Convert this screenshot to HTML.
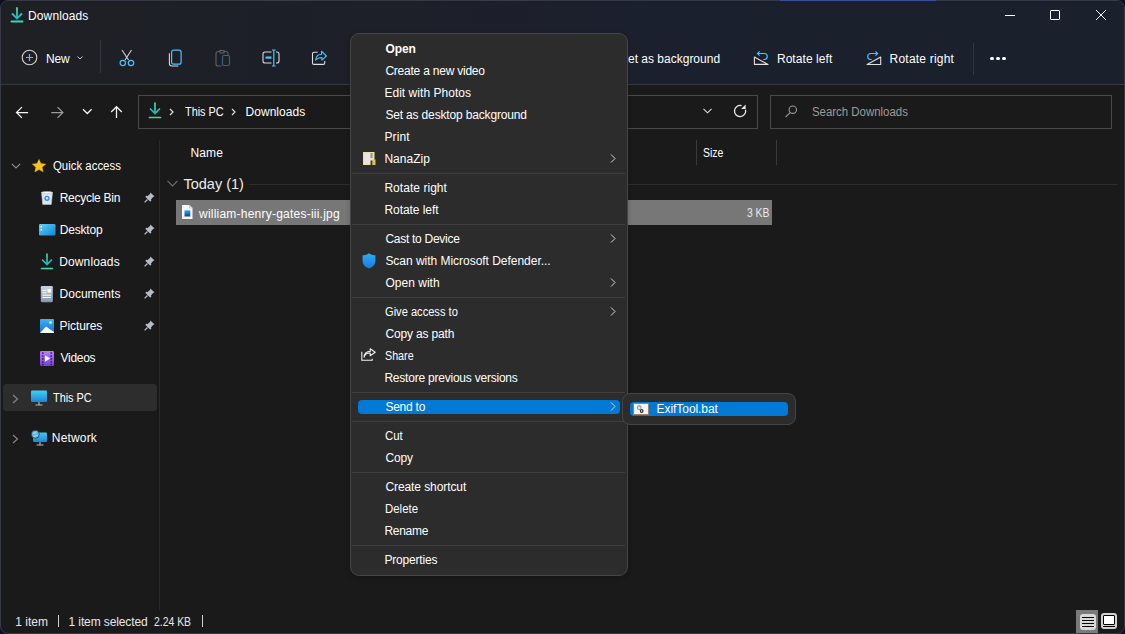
<!DOCTYPE html>
<html><head><meta charset="utf-8">
<style>
*{box-sizing:border-box;margin:0;padding:0}
html,body{width:1125px;height:634px;overflow:hidden;background:#0b1120}
body{font-family:"Liberation Sans",sans-serif;font-size:12px;color:#fff;position:relative}
.a{position:absolute}
.t{position:absolute;white-space:nowrap;line-height:14px}
svg{position:absolute;overflow:visible}
</style></head><body>

<div class="a" style="left:0;top:0;width:1125px;height:634px;border-radius:8px;background:#1a1a1a;overflow:hidden;border:1px solid #363b47"><div class="a" style="left:0;top:0;width:100%;height:84px;background:linear-gradient(to right,#1f2024 0,#1e2027 150px,#1d1f2a 440px,#1b202e 650px,#1b202d 100%)"></div><div class="a" style="left:0;top:83px;width:100%;height:1px;background:#363840"></div></div>
<div class="a" style="left:780px;top:0px;width:156px;height:1px;background:#3c4e9a"></div>
<svg style="left:10px;top:7px" width="14" height="16" viewBox="0 0 14 16"><defs><linearGradient id="g1" gradientUnits="userSpaceOnUse" x1="0" y1="0" x2="0" y2="12"><stop offset="0" stop-color="#3fe6a2"/><stop offset="1" stop-color="#1fb0c4"/></linearGradient></defs><path d="M7 1v10M2.5 7l4.5 4.5L11.5 7" stroke="url(#g1)" stroke-width="1.8" fill="none" stroke-linecap="round"/><path d="M1.5 14.5h11" stroke="#34dca6" stroke-width="1.8" stroke-linecap="round"/></svg>
<div class="t" style="left:28.00px;top:9.00px;letter-spacing:0.125px">Downloads</div>
<div class="a" style="left:1005px;top:15px;width:10px;height:1px;background:#fff"></div>
<div class="a" style="left:1050px;top:10px;width:10px;height:10px;border:1px solid #fff;border-radius:1px"></div>
<svg style="left:1096px;top:10px" width="10" height="10" viewBox="0 0 10 10"><path d="M0 0L10 10M10 0L0 10" stroke="#fff" stroke-width="1"/></svg>
<svg style="left:21px;top:49px" width="17" height="17" viewBox="0 0 17 17"><circle cx="8.5" cy="8.5" r="7.3" stroke="#d0d0d0" stroke-width="1.1" fill="none"/><path d="M8.5 5v7M5 8.5h7" stroke="#4cc2ff" stroke-width="1.2"/></svg>
<div class="t" style="left:45.90px;top:52.00px;letter-spacing:-0.150px">New</div>
<svg style="left:77px;top:56px" width="6" height="4" viewBox="0 0 6 4"><path d="M0.5 0.5L3 3L5.5 0.5" stroke="#c8c8c8" stroke-width="1" fill="none"/></svg>
<div class="a" style="left:100px;top:40px;width:1px;height:33px;background:#33363f"></div>
<svg style="left:118px;top:49px" width="18" height="18" viewBox="0 0 18 18"><path d="M4 1l6.5 10M13.5 1L7 11" stroke="#d0d0d0" stroke-width="1.1" fill="none"/><circle cx="4.8" cy="14" r="2.7" stroke="#4cc2ff" stroke-width="1.2" fill="none"/><circle cx="13" cy="14" r="2.7" stroke="#4cc2ff" stroke-width="1.2" fill="none"/></svg>
<svg style="left:168px;top:49px" width="16" height="18" viewBox="0 0 16 18"><rect x="3.6" y="1.2" width="9.5" height="14" rx="2" stroke="#4cc2ff" stroke-width="1.2" fill="none"/><path d="M1.4 4.2v10.4a2.4 2.4 0 0 0 2.4 2.4h6.6" stroke="#d8d8d8" stroke-width="1.1" fill="none"/></svg>
<svg style="left:215px;top:49px" width="17" height="18" viewBox="0 0 17 18"><path d="M5 2.5H3a2 2 0 0 0-2 2v10.5a2 2 0 0 0 2 2h3.5M9 2.5h2a2 2 0 0 1 2 2V6M5 1.5h4v2.5H5z" stroke="#606060" stroke-width="1.1" fill="none"/><rect x="7.5" y="6.5" width="7" height="10" rx="1.5" stroke="#2d6a8c" stroke-width="1.1" fill="none"/></svg>
<svg style="left:262px;top:49px" width="19" height="18" viewBox="0 0 19 18"><path d="M9.5 3H3a2 2 0 0 0-2 2v7a2 2 0 0 0 2 2h6.5M14 3h1a2 2 0 0 1 2 2v7a2 2 0 0 1-2 2h-1" stroke="#d8d8d8" stroke-width="1.1" fill="none"/><path d="M11.8 1v16M10 1h3.6M10 17h3.6" stroke="#4cc2ff" stroke-width="1.2" fill="none"/><rect x="3.5" y="7.5" width="6" height="2.2" fill="#4cc2ff"/></svg>
<svg style="left:311px;top:49px" width="18" height="18" viewBox="0 0 18 18"><path d="M6.7 3.2H3a1.5 1.5 0 0 0-1.5 1.5V13.9a1.5 1.5 0 0 0 1.5 1.5H12.2a1.5 1.5 0 0 0 1.5-1.5V11.9" stroke="#e0e0e0" stroke-width="1.1" fill="none"/><path d="M4.5 11.2C5 7.5 7.5 5.2 10.5 5.2V2.2L15.4 7L10.9 11.2V8.6C8 8.4 6 9.5 4.5 11.2z" stroke="#4cc2ff" stroke-width="1.1" fill="none" stroke-linejoin="round"/></svg>
<div class="t" style="left:620px;top:52px">Set as background</div>
<svg style="left:752px;top:51px" width="18" height="16" viewBox="0 0 18 16"><path d="M2.4 6.1V13.4H16z" stroke="#e0e0e0" stroke-width="1.1" fill="none" stroke-linejoin="round"/><path d="M5.5 2.5H12.3A3 3 0 0 1 12.3 8.5H11.3M7.6 0.3L5.4 2.5L7.6 4.7" stroke="#4cc2ff" stroke-width="1.1" fill="none"/></svg>
<div class="t" style="left:776.90px;top:52.00px;letter-spacing:0.070px">Rotate left</div>
<svg style="left:866px;top:50px" width="18" height="16" viewBox="0 0 18 16"><path d="M14.7 7.1V14.5H1.1z" stroke="#e0e0e0" stroke-width="1.1" fill="none" stroke-linejoin="round"/><path d="M11.6 3.5H4.7A3 3 0 0 0 4.7 9.5H5.7M9.5 1.3L11.7 3.5L9.5 5.7" stroke="#4cc2ff" stroke-width="1.1" fill="none"/></svg>
<div class="t" style="left:889.60px;top:52.00px;letter-spacing:0.209px">Rotate right</div>
<div class="a" style="left:973px;top:43px;width:1px;height:32px;background:#33363f"></div>
<div class="a" style="left:989.6px;top:57px;width:4px;height:3px;border-radius:1.5px;background:#fff"></div>
<div class="a" style="left:995.9px;top:57px;width:4px;height:3px;border-radius:1.5px;background:#fff"></div>
<div class="a" style="left:1002.2px;top:57px;width:4px;height:3px;border-radius:1.5px;background:#fff"></div>
<svg style="left:15px;top:105px" width="15" height="14" viewBox="0 0 15 14"><path d="M13.1 7.5H2M6.9 2.1L1.5 7.5L6.9 12.9" stroke="#f4f4f4" stroke-width="1.25" fill="none"/></svg>
<svg style="left:50px;top:105px" width="15" height="14" viewBox="0 0 15 14"><path d="M1.2 7.5H12.4M7.5 2.1L12.9 7.5L7.5 12.9" stroke="#9c9c9c" stroke-width="1.25" fill="none"/></svg>
<svg style="left:82px;top:108px" width="11" height="7" viewBox="0 0 11 7"><path d="M1 1.2L5.3 5.5L9.6 1.2" stroke="#f4f4f4" stroke-width="1.25" fill="none"/></svg>
<svg style="left:110px;top:105px" width="14" height="15" viewBox="0 0 14 15"><path d="M6.5 13V2M1.2 7L6.5 1.7L11.8 7" stroke="#f4f4f4" stroke-width="1.25" fill="none"/></svg>
<div class="a" style="left:138px;top:95px;width:620px;height:34px;border:1px solid #4a4a4a;background:#1a1a1a"></div>
<svg style="left:148px;top:102px" width="14" height="17" viewBox="0 0 14 17"><defs><linearGradient id="g2" gradientUnits="userSpaceOnUse" x1="0" y1="0" x2="0" y2="12"><stop offset="0" stop-color="#3fe6a2"/><stop offset="1" stop-color="#1fb0c4"/></linearGradient></defs><path d="M7 1v10.5M2.5 7l4.5 4.5L11.5 7" stroke="url(#g2)" stroke-width="1.7" fill="none" stroke-linecap="round"/><path d="M1.5 15.5h11" stroke="#34dca6" stroke-width="1.7" stroke-linecap="round"/></svg>
<svg style="left:169px;top:108px" width="6" height="8" viewBox="0 0 6 8"><path d="M1 1l3 3-3 3" stroke="#e0e0e0" stroke-width="1.2" fill="none"/></svg>
<div class="t" style="left:184.90px;top:105.00px;transform:scaleX(0.9048);transform-origin:0.0px 0">This PC</div>
<svg style="left:231px;top:108px" width="6" height="8" viewBox="0 0 6 8"><path d="M1 1l3 3-3 3" stroke="#e0e0e0" stroke-width="1.2" fill="none"/></svg>
<div class="t" style="left:245.60px;top:105.00px;letter-spacing:0.025px">Downloads</div>
<svg style="left:703px;top:108px" width="9" height="6" viewBox="0 0 9 6"><path d="M0.5 0.8L4.5 4.8L8.5 0.8" stroke="#e0e0e0" stroke-width="1.1" fill="none"/></svg>
<svg style="left:733px;top:104px" width="14" height="14" viewBox="0 0 14 14"><path d="M12.5 5.55A5.6 5.6 0 1 1 8.55 1.6" stroke="#ececec" stroke-width="1.3" fill="none"/><path d="M12.6 0.6L12.6 5.1L8.1 5.1z" fill="#ececec"/></svg>
<div class="a" style="left:770px;top:95px;width:342px;height:34px;border:1px solid #4a4a4a;background:#1a1a1a"></div>
<svg style="left:784px;top:105px" width="14" height="14" viewBox="0 0 14 14"><circle cx="8.8" cy="4.7" r="3.7" stroke="#9a9a9a" stroke-width="1.1" fill="none"/><path d="M6.1 7.6L1.6 12.1" stroke="#9a9a9a" stroke-width="1.2"/></svg>
<div class="t" style="left:811.70px;top:105.00px;color:#9c9c9c;transform:scaleX(0.9515);transform-origin:0.0px 0">Search Downloads</div>
<div class="a" style="left:159px;top:140px;width:1px;height:470px;background:#2a2a2a"></div>
<div class="a" style="left:157px;top:140px;width:1px;height:470px;background:#161616"></div>
<svg style="left:11px;top:163px" width="10" height="6" viewBox="0 0 10 6"><path d="M0.8 0.8L5 5L9.2 0.8" stroke="#909090" stroke-width="1.1" fill="none"/></svg>
<svg style="left:32px;top:159px" width="14" height="14" viewBox="0 0 14 14"><path d="M7 0.3L9 4.6L13.7 5.1L10.2 8.3L11.2 13L7 10.6L2.8 13L3.8 8.3L0.3 5.1L5 4.6z" fill="#f7c21a" stroke="#e8a800" stroke-width="0.4" stroke-linejoin="round"/></svg>
<div class="t" style="left:52.50px;top:159.00px;transform:scaleX(0.9507);transform-origin:0.0px 0">Quick access</div>
<svg style="left:41px;top:191px" width="12" height="14" viewBox="0 0 12 14"><path d="M0.5 1.5h11l-1.2 12H1.7z" fill="#dfe6ee" stroke="#b8c2cc" stroke-width="0.6"/><ellipse cx="6" cy="1.6" rx="5.5" ry="1.2" fill="#f4f6f8" stroke="#aab4be" stroke-width="0.5"/><circle cx="6" cy="7.3" r="2.6" fill="#2a8ee8"/><circle cx="6" cy="7.3" r="1.2" fill="#dfe6ee"/></svg>
<div class="t" style="left:59.70px;top:191.00px;letter-spacing:-0.270px">Recycle Bin</div>
<svg style="left:39px;top:224px" width="17" height="12" viewBox="0 0 17 12"><defs><linearGradient id="dk" x1="0" y1="0" x2="1" y2="1"><stop offset="0" stop-color="#5fd3f8"/><stop offset="1" stop-color="#1583d6"/></linearGradient></defs><rect x="0" y="0" width="16.5" height="11.5" rx="1.2" fill="url(#dk)"/><rect x="1.5" y="2" width="1.5" height="1.5" fill="#fff"/><rect x="1.5" y="5" width="1.5" height="1.5" fill="#fff"/></svg>
<div class="t" style="left:59.70px;top:223.00px;letter-spacing:-0.167px">Desktop</div>
<svg style="left:40px;top:253px" width="14" height="17" viewBox="0 0 14 17"><defs><linearGradient id="g3" gradientUnits="userSpaceOnUse" x1="0" y1="0" x2="0" y2="12"><stop offset="0" stop-color="#3fe6a2"/><stop offset="1" stop-color="#1fb0c4"/></linearGradient></defs><path d="M7 1v10.5M2.5 7l4.5 4.5L11.5 7" stroke="url(#g3)" stroke-width="1.6" fill="none" stroke-linecap="round"/><path d="M1.5 15.5h11" stroke="#34dca6" stroke-width="1.6" stroke-linecap="round"/></svg>
<div class="t" style="left:59.20px;top:255.00px;letter-spacing:0.137px">Downloads</div>
<svg style="left:40px;top:286px" width="13" height="17" viewBox="0 0 13 17"><defs><linearGradient id="dc" x1="0" y1="0" x2="0" y2="1"><stop offset="0" stop-color="#c8d4e2"/><stop offset="1" stop-color="#8298b0"/></linearGradient></defs><rect x="0.8" y="0" width="12" height="16.2" rx="1.2" fill="url(#dc)"/><path d="M2.5 4.3h4M2.5 6.8h4M2.5 9.2h8.5M2.5 11.5h8.5" stroke="#fff" stroke-width="1"/><rect x="7.5" y="3" width="3.5" height="3.5" fill="#fff"/></svg>
<div class="t" style="left:59.50px;top:287.00px;letter-spacing:0.025px">Documents</div>
<svg style="left:40px;top:319px" width="14" height="14" viewBox="0 0 14 14"><defs><linearGradient id="pc" x1="0" y1="0" x2="0" y2="1"><stop offset="0" stop-color="#3cb4f5"/><stop offset="1" stop-color="#0f6fd6"/></linearGradient></defs><rect x="0" y="0" width="14" height="14" rx="1" fill="url(#pc)"/><path d="M0 14L6 7.5L14 13V14z" fill="#fff"/><circle cx="10.5" cy="3.5" r="1.3" fill="#fff"/></svg>
<div class="t" style="left:59.50px;top:319.00px;letter-spacing:-0.071px">Pictures</div>
<svg style="left:40px;top:351px" width="14" height="15" viewBox="0 0 14 15"><defs><linearGradient id="vd" x1="0" y1="0" x2="0" y2="1"><stop offset="0" stop-color="#b880f2"/><stop offset="1" stop-color="#7440d8"/></linearGradient></defs><rect x="0" y="0" width="14" height="15" rx="1.2" fill="url(#vd)"/><path d="M2 2h1.5M2 5h1.5M2 8h1.5M2 11h1.5M2 13.5h1.5M10.5 2h1.5M10.5 5h1.5M10.5 8h1.5M10.5 11h1.5M10.5 13.5h1.5" stroke="#3a1a70" stroke-width="1.3"/><path d="M5 4.3v6.4l5.2-3.2z" fill="#fff"/></svg>
<div class="t" style="left:60.50px;top:351.00px;letter-spacing:-0.280px">Videos</div>
<svg style="left:143.6px;top:191.8px" width="11" height="11" viewBox="0 0 11 11"><path d="M6.5 0.5L10.5 4.5L9 5L7 7.5L7.3 9L6 9.5L1.5 5L2 3.7L3.5 4L6 2z" fill="#b4bcc4"/><path d="M3.5 7.5L0.6 10.4" stroke="#b4bcc4" stroke-width="1.3"/></svg>
<svg style="left:143.6px;top:223.8px" width="11" height="11" viewBox="0 0 11 11"><path d="M6.5 0.5L10.5 4.5L9 5L7 7.5L7.3 9L6 9.5L1.5 5L2 3.7L3.5 4L6 2z" fill="#b4bcc4"/><path d="M3.5 7.5L0.6 10.4" stroke="#b4bcc4" stroke-width="1.3"/></svg>
<svg style="left:143.6px;top:255.8px" width="11" height="11" viewBox="0 0 11 11"><path d="M6.5 0.5L10.5 4.5L9 5L7 7.5L7.3 9L6 9.5L1.5 5L2 3.7L3.5 4L6 2z" fill="#b4bcc4"/><path d="M3.5 7.5L0.6 10.4" stroke="#b4bcc4" stroke-width="1.3"/></svg>
<svg style="left:143.6px;top:287.8px" width="11" height="11" viewBox="0 0 11 11"><path d="M6.5 0.5L10.5 4.5L9 5L7 7.5L7.3 9L6 9.5L1.5 5L2 3.7L3.5 4L6 2z" fill="#b4bcc4"/><path d="M3.5 7.5L0.6 10.4" stroke="#b4bcc4" stroke-width="1.3"/></svg>
<svg style="left:143.6px;top:319.8px" width="11" height="11" viewBox="0 0 11 11"><path d="M6.5 0.5L10.5 4.5L9 5L7 7.5L7.3 9L6 9.5L1.5 5L2 3.7L3.5 4L6 2z" fill="#b4bcc4"/><path d="M3.5 7.5L0.6 10.4" stroke="#b4bcc4" stroke-width="1.3"/></svg>
<div class="a" style="left:3px;top:384px;width:154px;height:27px;background:#2d2d2d;border-radius:3px"></div>
<svg style="left:12px;top:394px" width="7" height="10" viewBox="0 0 7 10"><path d="M1 1l4.5 4-4.5 4" stroke="#8a8a8a" stroke-width="1.1" fill="none"/></svg>
<svg style="left:31px;top:390px" width="16" height="16" viewBox="0 0 16 16"><defs><linearGradient id="mn" x1="0" y1="0" x2="0" y2="1"><stop offset="0" stop-color="#3ed0f5"/><stop offset="1" stop-color="#1a86d8"/></linearGradient></defs><rect x="0" y="0.5" width="16" height="11.5" rx="1" fill="url(#mn)"/><path d="M8 12v3M4.5 15h7" stroke="#b0b8c0" stroke-width="1.2"/></svg>
<div class="t" style="left:52.80px;top:391.00px;transform:scaleX(0.9071);transform-origin:0.0px 0">This PC</div>
<svg style="left:12px;top:434px" width="7" height="10" viewBox="0 0 7 10"><path d="M1 1l4.5 4-4.5 4" stroke="#8a8a8a" stroke-width="1.1" fill="none"/></svg>
<svg style="left:31px;top:430px" width="16" height="16" viewBox="0 0 16 16"><defs><linearGradient id="nw" x1="0" y1="0" x2="0" y2="1"><stop offset="0" stop-color="#3ec8f2"/><stop offset="1" stop-color="#1a86d8"/></linearGradient></defs><rect x="2" y="2.5" width="14" height="9.5" rx="1" fill="url(#nw)"/><path d="M9 12v3M5.5 15h7" stroke="#b0b8c0" stroke-width="1.2"/><circle cx="4.3" cy="4.3" r="4" fill="#5fb8e8" stroke="#1a1a1a" stroke-width="0.6"/><path d="M2 3c1.5 0.5 2.5 0 3.5-1.5M3 7c0.5-1.5 2-2 3.5-1.5" stroke="#c8eaff" stroke-width="0.8" fill="none"/></svg>
<div class="t" style="left:51.80px;top:431.00px;letter-spacing:0.167px">Network</div>
<div class="t" style="left:190.40px;top:146.00px;letter-spacing:0.167px">Name</div>
<div class="a" style="left:696px;top:140px;width:1px;height:25px;background:#3a3a3a"></div>
<div class="t" style="left:703.20px;top:146.00px;transform:scaleX(0.8696);transform-origin:0.0px 0">Size</div>
<div class="a" style="left:776px;top:140px;width:1px;height:25px;background:#3a3a3a"></div>
<svg style="left:167px;top:180px" width="12" height="8" viewBox="0 0 12 8"><path d="M0.5 0.8L5.5 6L10.5 0.8" stroke="#707070" stroke-width="1.1" fill="none"/></svg>
<div class="t" style="left:183.40px;top:176.00px;font-size:14.5px;line-height:17px;color:#ececec;letter-spacing:0.012px">Today (1)</div>
<div class="a" style="left:249px;top:184px;width:869px;height:1px;background:#2e2e2e"></div>
<div class="a" style="left:176px;top:200px;width:596px;height:25px;background:#777777"></div>
<svg style="left:181.5px;top:204.5px" width="11" height="15" viewBox="0 0 11 15"><defs><linearGradient id="jp" x1="0" y1="0" x2="0" y2="1"><stop offset="0" stop-color="#30b0f0"/><stop offset="1" stop-color="#0a3aa0"/></linearGradient></defs><path d="M0 0h7.5l3 3v11H0z" fill="#fafafa"/><path d="M7.5 0v3h3" fill="none" stroke="#b8b8b8" stroke-width="0.7"/><rect x="2.5" y="5.3" width="5.8" height="6.2" fill="url(#jp)"/></svg>
<div class="t" style="left:199.00px;top:207.00px;letter-spacing:0.227px">william-henry-gates-iii.jpg</div>
<div class="t" style="left:746.60px;top:206.00px;color:#e8e8e8;transform:scaleX(0.8615);transform-origin:0.0px 0">3 KB</div>
<div class="t" style="left:15.20px;top:615.00px;color:#e8e8e8;letter-spacing:0.020px">1 item</div>
<div class="a" style="left:58px;top:615px;width:1px;height:12px;background:#d0d0d0"></div>
<div class="t" style="left:68.60px;top:615.00px;color:#e8e8e8;letter-spacing:-0.121px">1 item selected</div>
<div class="t" style="left:154.00px;top:615.00px;color:#e8e8e8;transform:scaleX(0.8674);transform-origin:0.0px 0">2.24 KB</div>
<div class="a" style="left:202px;top:615px;width:1px;height:12px;background:#d0d0d0"></div>
<div class="a" style="left:1076px;top:610px;width:22px;height:23px;background:#7a7a7a"></div>
<div class="a" style="left:1080px;top:614px;width:16px;height:16px;background:#d8d8d8;border-radius:3px"></div>
<div class="a" style="left:1082px;top:617px;width:12px;height:1px;background:#000"></div>
<div class="a" style="left:1082px;top:620px;width:12px;height:1px;background:#000"></div>
<div class="a" style="left:1082px;top:623px;width:12px;height:1px;background:#000"></div>
<div class="a" style="left:1082px;top:626px;width:12px;height:1px;background:#000"></div>
<div class="a" style="left:1101px;top:613px;width:16px;height:16px;background:#d0d0d0;border-radius:3px"></div>
<div class="a" style="left:1103px;top:615px;width:12px;height:10px;background:#fff;border:1px solid #000;border-radius:1px"></div>
<div class="a" style="left:1103px;top:626px;width:12px;height:1px;background:#000"></div>
<div class="a" style="left:350px;top:33px;width:278px;height:543px;background:#2c2c2c;border:1px solid #454545;border-radius:9px;box-shadow:0 2px 5px rgba(0,0,0,0.22)"></div>
<div class="t" style="left:385.40px;top:42.00px;font-weight:700;letter-spacing:-0.067px">Open</div>
<div class="t" style="left:385.40px;top:64.00px;letter-spacing:-0.224px">Create a new video</div>
<div class="t" style="left:384.40px;top:86.00px;letter-spacing:0.040px">Edit with Photos</div>
<div class="t" style="left:385.40px;top:108.00px;letter-spacing:-0.162px">Set as desktop background</div>
<div class="t" style="left:384.40px;top:130.00px;letter-spacing:0.150px">Print</div>
<div class="t" style="left:384.40px;top:152.00px;letter-spacing:0.033px">NanaZip</div>
<svg style="left:610px;top:154px" width="6" height="9" viewBox="0 0 6 9"><path d="M1 0.5l4 4-4 4" stroke="#d8d8d8" stroke-width="1" fill="none"/></svg>
<div class="a" style="left:352px;top:173px;width:273px;height:1px;background:#404040"></div>
<div class="t" style="left:384.40px;top:181.00px;letter-spacing:0.045px">Rotate right</div>
<div class="t" style="left:384.40px;top:203.00px;letter-spacing:-0.050px">Rotate left</div>
<div class="a" style="left:352px;top:224px;width:273px;height:1px;background:#404040"></div>
<div class="t" style="left:385.40px;top:232.00px;letter-spacing:-0.277px">Cast to Device</div>
<svg style="left:610px;top:234px" width="6" height="9" viewBox="0 0 6 9"><path d="M1 0.5l4 4-4 4" stroke="#d8d8d8" stroke-width="1" fill="none"/></svg>
<div class="t" style="left:385.40px;top:254.00px;letter-spacing:-0.027px">Scan with Microsoft Defender...</div>
<div class="t" style="left:385.40px;top:276.00px;letter-spacing:0.025px">Open with</div>
<svg style="left:610px;top:278px" width="6" height="9" viewBox="0 0 6 9"><path d="M1 0.5l4 4-4 4" stroke="#d8d8d8" stroke-width="1" fill="none"/></svg>
<div class="a" style="left:352px;top:297px;width:273px;height:1px;background:#404040"></div>
<div class="t" style="left:385.40px;top:305.00px;transform:scaleX(0.9253);transform-origin:0.0px 0">Give access to</div>
<svg style="left:610px;top:307px" width="6" height="9" viewBox="0 0 6 9"><path d="M1 0.5l4 4-4 4" stroke="#d8d8d8" stroke-width="1" fill="none"/></svg>
<div class="t" style="left:385.40px;top:327.00px;letter-spacing:-0.155px">Copy as path</div>
<div class="t" style="left:385.40px;top:349.00px;transform:scaleX(0.8938);transform-origin:0.0px 0">Share</div>
<div class="t" style="left:384.40px;top:371.00px;letter-spacing:-0.221px">Restore previous versions</div>
<div class="a" style="left:352px;top:392px;width:273px;height:1px;background:#404040"></div>
<div class="a" style="left:358px;top:400px;width:262px;height:14px;background:#0078d6;border-radius:4px"></div>
<div class="t" style="left:385.40px;top:400.00px;letter-spacing:-0.233px">Send to</div>
<svg style="left:610px;top:402px" width="6" height="9" viewBox="0 0 6 9"><path d="M1 0.5l4 4-4 4" stroke="#d8d8d8" stroke-width="1" fill="none"/></svg>
<div class="a" style="left:352px;top:421px;width:273px;height:1px;background:#404040"></div>
<div class="t" style="left:385.40px;top:429.00px;transform:scaleX(0.9526);transform-origin:0.0px 0">Cut</div>
<div class="t" style="left:385.40px;top:451.00px;letter-spacing:-0.100px">Copy</div>
<div class="a" style="left:352px;top:472px;width:273px;height:1px;background:#404040"></div>
<div class="t" style="left:385.40px;top:480.00px;letter-spacing:-0.086px">Create shortcut</div>
<div class="t" style="left:385.20px;top:502.00px;transform:scaleX(0.9500);transform-origin:1.0px 0">Delete</div>
<div class="t" style="left:384.40px;top:524.00px;letter-spacing:-0.280px">Rename</div>
<div class="a" style="left:352px;top:545px;width:273px;height:1px;background:#404040"></div>
<div class="t" style="left:384.40px;top:553.00px;letter-spacing:-0.178px">Properties</div>
<svg style="left:362.7px;top:152px" width="13" height="14" viewBox="0 0 13 14"><rect x="0" y="0" width="11.5" height="13" fill="#efe2a0"/><rect x="1.5" y="1.5" width="6" height="10" fill="#e6e4ee"/><rect x="7.5" y="1" width="2" height="5" fill="#9090a8"/><rect x="7.5" y="8.5" width="2" height="4.5" fill="#404040"/><rect x="10" y="7.5" width="2.5" height="5.5" fill="#e8c040"/></svg>
<svg style="left:362px;top:252.5px" width="14" height="16" viewBox="0 0 14 16"><defs><linearGradient id="sh" x1="0" y1="0" x2="0" y2="1"><stop offset="0" stop-color="#2ab0f5"/><stop offset="1" stop-color="#1a78e0"/></linearGradient></defs><path d="M7 0.3C5 1.8 3 2.3 0.6 2.3V8.5C0.6 11.5 3 14 7 15.5C11 14 13.4 11.5 13.4 8.5V2.3C11 2.3 9 1.8 7 0.3z" fill="url(#sh)"/></svg>
<svg style="left:361px;top:348px" width="16" height="14" viewBox="0 0 16 14"><path d="M0.8 3.8V12.3H11.2V10.8" stroke="#f0f0f0" stroke-width="1.1" fill="none"/><path d="M3.2 9.3C3.5 6.3 6 5 9.2 5V7.8L14.2 4.2L9.2 0.8V3.4C5.5 3.4 3 5.5 3.2 9.3z" stroke="#f0f0f0" stroke-width="1.1" fill="none" stroke-linejoin="round"/></svg>
<div class="a" style="left:622px;top:393px;width:174px;height:32px;background:#2c2c2c;border:1px solid #454545;border-radius:8px"></div>
<div class="a" style="left:630px;top:402px;width:158px;height:14px;background:#0078d6;border-radius:4px"></div>
<svg style="left:633px;top:403px" width="16" height="12" viewBox="0 0 16 12"><rect x="0.5" y="0.5" width="15" height="11" fill="#f6f6f6" stroke="#9a8068" stroke-width="1"/><circle cx="6.2" cy="4.8" r="1.9" fill="#dfe6ea" stroke="#8a9aa6" stroke-width="1.1"/><circle cx="8.7" cy="8" r="1.3" fill="#fff" stroke="#333" stroke-width="1.2"/></svg>
<div class="t" style="left:656.60px;top:402.00px;letter-spacing:-0.064px">ExifTool.bat</div>
</body></html>
